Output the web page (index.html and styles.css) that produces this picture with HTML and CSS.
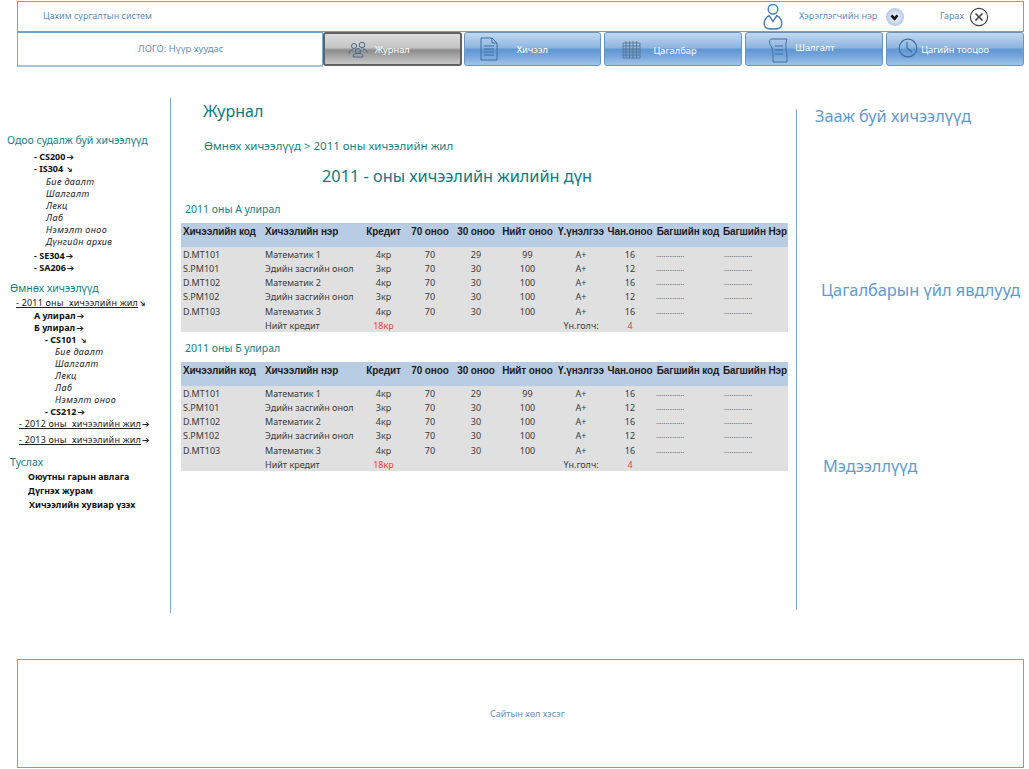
FILE: index.html
```html
<!DOCTYPE html>
<html lang="mn">
<head>
<meta charset="utf-8">
<title>Журнал</title>
<link rel="stylesheet" href="styles.css">
</head>
<body>
<header class="topbar">
  <span class="system">Цахим сургалтын систем</span>
  <svg class="user-icon" viewBox="0 0 20 28"><circle cx="10" cy="6.500" r="5"/><path d="M6 13 L10 19 L14 13 C18 15 19.500 19 19 23 C18 27 14 27 10 27 C6 27 2 27 1 23 C.5 19 2 15 6 13 Z"/></svg>
  <span class="username">Хэрэглэгчийн нэр</span>
  <span class="dropdown"><svg viewBox="0 0 10 8"><path d="M1.500 1.500 L5 5.500 L8.500 1.500"/></svg></span>
  <span class="logout">Гарах</span>
  <svg class="close-icon" viewBox="0 0 20 20"><circle cx="10" cy="10" r="8.600"/><path d="M6.500 6.500 L13.500 13.500 M13.500 6.500 L6.500 13.500"/></svg>
</header>
<nav class="navrow">
  <div class="logo">ЛОГО: Нүүр хуудас</div>
  <a class="tab active">
    <svg class="tab-icon people" viewBox="0 0 20 17"><circle cx="6" cy="5" r="2.500"/><circle cx="14" cy="4" r="2.800"/><circle cx="10" cy="10" r="2.500"/><path d="M1 13c0-3 2-4 4-4M19 12c0-3-2-4-4-4M5 16c0-3 2-4 5-3.500 3-.5 5 .5 5 3.500z"/></svg>
    <span>Журнал</span>
  </a>
  <a class="tab">
    <svg class="tab-icon doc" viewBox="0 0 18 24"><path d="M1 1 H12 L17 6 V23 H1 Z M12 1 V6 H17 M4 9 H14 M4 12 H14 M4 15 H14 M4 18 H14"/></svg>
    <span class="label-lesson">Хичээл</span>
  </a>
  <a class="tab">
    <svg class="tab-icon cal" viewBox="0 0 19 19"><path d="M1 3 H18 V18 H1 Z M1 6 H18 M1 9 H18 M1 12 H18 M1 15 H18 M4 1 V18 M7.500 1 V18 M11 1 V18 M14.500 1 V18"/></svg>
    <span class="label-cal">Цагалбар</span>
  </a>
  <a class="tab">
    <svg class="tab-icon scroll" viewBox="0 0 21 25"><path d="M3 1 H19 C17 6 18 12 19 18 V24 H5 C5 18 5 10 3 8 C1 6 1 2 3 1 Z M7 8 H15 M7 12 H15 M7 16 H15"/></svg>
    <span class="label-test">Шалгалт</span>
  </a>
  <a class="tab">
    <svg class="tab-icon clock" viewBox="0 0 20 20"><circle cx="10" cy="10" r="8.800"/><path d="M9 4 V10 L14 14"/></svg>
    <span class="label-clock">Цагийн тооцоо</span>
  </a>
</nav>

<div class="content">
  <aside class="sidebar">
    <h3 class="side-title current-title">Одоо судалж буй хичээлүүд</h3>
    <ul class="tree tree-current">
      <li class="course l1">- CS200<span class="arr">➔</span></li>
      <li class="course l1">- IS304 <span class="arr sm">➔</span></li>
      <li class="item l2 first">Бие даалт</li>
      <li class="item l2">Шалгалт</li>
      <li class="item l2">Лекц</li>
      <li class="item l2">Лаб</li>
      <li class="item l2">Нэмэлт оноо</li>
      <li class="item l2">Дүнгийн архив</li>
      <li class="course l1 after-items">- SE304<span class="arr">➔</span></li>
      <li class="course l1">- SA206<span class="arr">➔</span></li>
    </ul>
    <h3 class="side-title past-title">Өмнөх хичээлүүд</h3>
    <ul class="tree">
      <li class="year y1"><u>- 2011 оны&nbsp; хичээлийн жил</u><span class="arr sm">➔</span></li>
      <li class="course l1 term-a">А улирал<span class="arr">➔</span></li>
      <li class="course l1">Б улирал<span class="arr">➔</span></li>
      <li class="course l3">- CS101 <span class="arr sm">➔</span></li>
      <li class="item l4">Бие даалт</li>
      <li class="item l4">Шалгалт</li>
      <li class="item l4">Лекц</li>
      <li class="item l4">Лаб</li>
      <li class="item l4">Нэмэлт оноо</li>
      <li class="course l3">- CS212<span class="arr">➔</span></li>
      <li class="year y2"><u>- 2012 оны&nbsp; хичээлийн жил</u><span class="arr">➔</span></li>
      <li class="year y2 gap"><u>- 2013 оны&nbsp; хичээлийн жил</u><span class="arr">➔</span></li>
    </ul>
    <h3 class="side-title help-title">Туслах</h3>
    <ul class="tree help">
      <li>Оюутны гарын авлага</li>
      <li>Дүгнэх журам</li>
      <li class="gap-help">Хичээлийн хувиар үзэх</li>
    </ul>
  </aside>

  <main class="main">
    <h1 class="page-title">Журнал</h1>
    <p class="crumb">Өмнөх хичээлүүд &gt; 2011 оны хичээлийн жил</p>
    <h2 class="year-title">2011 - оны хичээлийн жилийн дүн</h2>

    <h4 class="term first-term">2011 оны А улирал</h4>
    <table class="grades">
      <colgroup><col class="c1"><col class="c2"><col class="c3"><col class="c4"><col class="c5"><col class="c6"><col class="c7"><col class="c8"><col class="c9"><col class="c10"></colgroup>
      <thead><tr><th class="left">Хичээлийн код</th><th class="left">Хичээлийн нэр</th><th>Кредит</th><th>70 оноо</th><th>30 оноо</th><th>Нийт оноо</th><th>Ү.үнэлгээ</th><th>Чан.оноо</th><th>Багшийн код</th><th>Багшийн Нэр</th></tr></thead>
      <tbody>
        <tr><td class="left">D.MT101</td><td class="left">Математик 1</td><td>4кр</td><td>70</td><td>29</td><td>99</td><td>A+</td><td>16</td><td class="dots">...............</td><td class="dots">...............</td></tr>
        <tr><td class="left">S.PM101</td><td class="left">Эдийн засгийн онол</td><td>3кр</td><td>70</td><td>30</td><td>100</td><td>A+</td><td>12</td><td class="dots">...............</td><td class="dots">...............</td></tr>
        <tr><td class="left">D.MT102</td><td class="left">Математик 2</td><td>4кр</td><td>70</td><td>30</td><td>100</td><td>A+</td><td>16</td><td class="dots">...............</td><td class="dots">...............</td></tr>
        <tr><td class="left">S.PM102</td><td class="left">Эдийн засгийн онол</td><td>3кр</td><td>70</td><td>30</td><td>100</td><td>A+</td><td>12</td><td class="dots">...............</td><td class="dots">...............</td></tr>
        <tr><td class="left">D.MT103</td><td class="left">Математик 3</td><td>4кр</td><td>70</td><td>30</td><td>100</td><td>A+</td><td>16</td><td class="dots">...............</td><td class="dots">...............</td></tr>
        <tr><td></td><td class="left">Нийт кредит</td><td class="red">18кр</td><td></td><td></td><td></td><td>Үн.голч:</td><td class="red">4</td><td></td><td></td></tr>
      </tbody>
    </table>

    <h4 class="term second-term">2011 оны Б улирал</h4>
    <table class="grades">
      <colgroup><col class="c1"><col class="c2"><col class="c3"><col class="c4"><col class="c5"><col class="c6"><col class="c7"><col class="c8"><col class="c9"><col class="c10"></colgroup>
      <thead><tr><th class="left">Хичээлийн код</th><th class="left">Хичээлийн нэр</th><th>Кредит</th><th>70 оноо</th><th>30 оноо</th><th>Нийт оноо</th><th>Ү.үнэлгээ</th><th>Чан.оноо</th><th>Багшийн код</th><th>Багшийн Нэр</th></tr></thead>
      <tbody>
        <tr><td class="left">D.MT101</td><td class="left">Математик 1</td><td>4кр</td><td>70</td><td>29</td><td>99</td><td>A+</td><td>16</td><td class="dots">...............</td><td class="dots">...............</td></tr>
        <tr><td class="left">S.PM101</td><td class="left">Эдийн засгийн онол</td><td>3кр</td><td>70</td><td>30</td><td>100</td><td>A+</td><td>12</td><td class="dots">...............</td><td class="dots">...............</td></tr>
        <tr><td class="left">D.MT102</td><td class="left">Математик 2</td><td>4кр</td><td>70</td><td>30</td><td>100</td><td>A+</td><td>16</td><td class="dots">...............</td><td class="dots">...............</td></tr>
        <tr><td class="left">S.PM102</td><td class="left">Эдийн засгийн онол</td><td>3кр</td><td>70</td><td>30</td><td>100</td><td>A+</td><td>12</td><td class="dots">...............</td><td class="dots">...............</td></tr>
        <tr><td class="left">D.MT103</td><td class="left">Математик 3</td><td>4кр</td><td>70</td><td>30</td><td>100</td><td>A+</td><td>16</td><td class="dots">...............</td><td class="dots">...............</td></tr>
        <tr><td></td><td class="left">Нийт кредит</td><td class="red">18кр</td><td></td><td></td><td></td><td>Үн.голч:</td><td class="red">4</td><td></td><td></td></tr>
      </tbody>
    </table>
  </main>

  <aside class="rightcol">
    <h3 class="r-title r1">Зааж буй хичээлүүд</h3>
    <h3 class="r-title r2">Цагалбарын үйл явдлууд</h3>
    <h3 class="r-title r3">Мэдээллүүд</h3>
  </aside>
</div>

<footer class="footer">Сайтын хөл хэсэг</footer>
</body>
</html>
```
FILE: styles.css
```css
* { box-sizing: border-box; }
html, body { height: 769px; overflow: hidden; }
body { margin: 0; background: #fff; font-family: "Noto Sans", "Open Sans", sans-serif; color: #1a1a1a; position: relative; }
h1, h2, h3, h4, p, ul { margin: 0; padding: 0; font-weight: normal; }
ul { list-style: none; }

.topbar { margin: 1px 5px 0 17px; height: 31px; border: 1px solid #6fa3c7; display: flex; align-items: center; padding-bottom: 2px; font-size: 9px; color: #5f8fc0; }
.system { margin-left: 25px; flex: 1; }
.user-icon { width: 20px; height: 27px; margin: 2px 16px 0 1px; fill: none; stroke: #4a80b5; stroke-width: 1.500; }
.username { width: 87px; font-size: 9.200px; }
.dropdown { width: 18px; height: 18px; border-radius: 50%; background: radial-gradient(circle, #dfe8f6 30%, #8fb0dd 100%); display: flex; align-items: center; justify-content: center; margin: 3px 36px 0 0; }
.dropdown svg { width: 9px; height: 7px; fill: none; stroke: #111; stroke-width: 3; }
.logout { margin-right: 5px; }
.close-icon { width: 20px; height: 20px; margin: 2px 34px 0 0; fill: none; stroke: #444; stroke-width: 1.100; }
.close-icon path { stroke-width: 1.600; }

.navrow { margin: 0 5px 0 17px; height: 35px; display: flex; }
.logo { width: 306px; border: 1px solid #7fa8cc; border-top-color: #6fa3c7; border-bottom: 2px solid #a9c3dd; display: flex; align-items: center; padding: 0 0 2px 120px; font-size: 9.500px; color: #6a8fb8; }
.tab { width: 138px; margin-right: 3px; height: 34px; border: 1px solid #6a93bd; border-radius: 3px; display: flex; align-items: center; color: #fff; font-size: 9.300px; background: linear-gradient(#c2d8ef 0%, #8fb6e0 45%, #5f96d2 52%, #79a8dc 75%, #a4c4e8 100%); }
.tab:last-child { margin-right: 0; }
.tab.active { width: 139px; border: 2px solid #626262; background: linear-gradient(#dcdcdc 0%, #c4c4c4 45%, #8c8c8c 54%, #a8a8a8 75%, #c8c8c8 100%); margin-right: 2px; }
.tab-icon { fill: none; stroke: #3e6f9f; stroke-width: 1; }
.people { width: 20px; height: 17px; margin-left: 23px; margin-right: 7px; stroke: #4b6a8a; }
.doc { width: 18px; height: 24px; margin-left: 15px; margin-right: 19px; }
.cal { width: 19px; height: 19px; margin-left: 17px; margin-right: 12px; stroke: #55718d; stroke-width: .8; }
.label-cal { margin-top: 2px; }
.scroll { width: 21px; height: 25px; margin-left: 22px; margin-right: 6px; margin-top: 3px; }
.label-test { margin-top: -4px; }
.clock { width: 20px; height: 20px; margin-left: 11px; margin-right: 3px; margin-top: -3px; stroke: #3e6f9f; stroke-width: 1.200; }

.content { display: flex; height: 515px; margin-top: 31px; }
.sidebar { width: 171px; border-right: 1px solid #7fa8cc; padding-top: 35px; flex: none; }
.side-title { font-size: 10.500px; color: #137f85; line-height: 14px; height: 14px; }
.current-title { margin-left: 7px; }
.past-title { margin: 7px 0 0 10px; }
.help-title { margin: 9px 0 0 10px; }
.tree { font-size: 9px; color: #111; }
.tree li { line-height: 12px; height: 12px; white-space: nowrap; }
.tree-current { margin-top: 4px; }
.course { font-weight: 700; }
.item { font-style: italic; color: #222; letter-spacing: .4px; }
.l1 { margin-left: 34px; }
.l2 { margin-left: 46px; }
.first { margin-top: 1px; }
.after-items { margin-top: 2px; }
.l3 { margin-left: 45px; }
.l4 { margin-left: 55px; }
.year { color: #222; letter-spacing: .2px; }
.y1 { margin: 2px 0 0 16px; }
.term-a { margin-top: 1px; }
.y2 { margin-left: 19px; }
.gap { margin-top: 4px; }
.arr { display: inline-block; font-size: 9px; line-height: 10px; color: #222; margin-left: 1px; font-family: "DejaVu Sans", sans-serif; font-weight: 700; font-style: normal; letter-spacing: 0; }
.arr.sm { font-size: 8px; transform: rotate(45deg); }
.help { font-weight: 700; margin: 1px 0 0 28px; font-size: 8.900px; }
.tree.help li { line-height: 14px; height: 14px; }
.tree.help .gap-help { margin-left: 1px; }

.main { width: 625px; flex: none; padding: 0 8px 0 10px; }
.page-title { font-size: 16px; color: #0e7a7d; margin: 2px 0 0 22px; line-height: 22px; }
.crumb { font-size: 11.500px; color: #1a7f86; margin: 17px 0 0 23px; line-height: 14px; white-space: nowrap; }
.year-title { font-size: 16.300px; color: #0e7a7d; margin: 11px 0 0 141px; line-height: 24px; white-space: nowrap; }
.term { font-size: 10.500px; color: #137f85; margin-left: 4px; line-height: 14px; }
.first-term { margin-top: 14px; }
.second-term { margin-top: 9px; }
.grades { width: 607px; table-layout: fixed; border-collapse: collapse; margin-top: 7px; background: #e0e0e0; font-size: 9px; color: #3a3a3a; white-space: nowrap; }
.c1 { width: 82px; } .c2 { width: 97px; } .c3 { width: 47px; } .c4 { width: 46px; } .c5 { width: 46px; } .c6 { width: 57px; } .c7 { width: 50px; } .c8 { width: 48px; } .c9 { width: 68px; } .c10 { width: 66px; }
.grades th { height: 24px; background: #b8cce4; padding: 0 0 7px; font-family: "Liberation Sans", sans-serif; font-size: 10px; font-weight: 700; color: #1c1c1c; text-align: center; letter-spacing: -.1px; }
.grades td { height: 14px; padding: 0; text-align: center; line-height: 14px; }
.grades tbody tr:first-child td, .grades tbody tr:nth-child(5) td { height: 15px; padding-top: 1px; }
.grades tbody tr:last-child td { height: 13px; line-height: 13px; }
.grades .left { text-align: left; padding-left: 2px; }
.grades .dots { font-size: 7px; color: #666; text-align: left; padding-left: 2px; }
.grades .red { color: #f03a3a; }

.rightcol { flex: 1; position: relative; }
.rightcol::before { content: ""; position: absolute; left: 0; top: 11px; height: 501px; border-left: 1px solid #7fa8cc; }
.r-title { font-size: 16.350px; color: #5f9bd0; line-height: 24px; white-space: nowrap; }
.r1 { margin: 6px 0 0 19px; }
.r2 { margin: 150px 0 0 25px; }
.r3 { margin: 152px 0 0 27px; }

.footer { position: absolute; left: 17px; top: 659px; width: 1007px; height: 109px; border: 1px solid #6fa3c7; display: flex; align-items: center; padding: 0 0 1px 472px; font-size: 9px; color: #5f8fc0; }
```
